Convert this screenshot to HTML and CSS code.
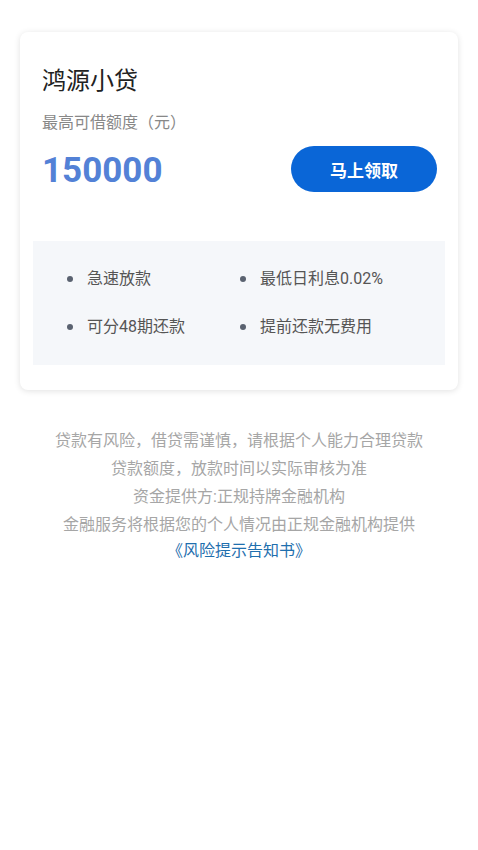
FILE: index.html
```html
<!DOCTYPE html>
<html lang="zh-CN">
<head>
<meta charset="utf-8">
<title>鸿源小贷</title>
<link rel="stylesheet" href="styles.css">
</head>
<body>
<div class="page-title">产品</div>
<div class="card">
  <div class="card-name">鸿源小贷</div>
  <div class="card-label">最高可借额度（元）</div>
  <div class="amount-row">
    <div class="amount">150000</div>
    <button class="apply-btn">马上领取</button>
  </div>
  <div class="features">
    <div class="feature"><span class="dot"></span><span>急速放款</span></div>
    <div class="feature"><span class="dot"></span><span>最低日利息0.02%</span></div>
    <div class="feature"><span class="dot"></span><span>可分48期还款</span></div>
    <div class="feature"><span class="dot"></span><span>提前还款无费用</span></div>
  </div>
</div>
<div class="notice">
  <p>贷款有风险，借贷需谨慎，请根据个人能力合理贷款</p>
  <p>贷款额度，放款时间以实际审核为准</p>
  <p>资金提供方:正规持牌金融机构</p>
  <p>金融服务将根据您的个人情况由正规金融机构提供</p>
  <p class="link">《风险提示告知书》</p>
</div>
</body>
</html>
```
FILE: styles.css
```css
* { box-sizing: border-box; }
html, body { margin: 0; padding: 0; background: #fff; }
body {
  font-family: Roboto, "Noto Sans CJK SC", sans-serif;
  width: 478px;
  overflow: hidden;
}
.page-title {
  margin: -27px 0 0 24px;
  font-size: 24px;
  line-height: 30px;
  height: 30px;
  color: #222;
}
.card {
  margin: 29px 20px 0;
  width: 438px;
  background: #fff;
  border-radius: 8px;
  box-shadow: 0 1px 6px rgba(0,0,0,0.12);
  padding: 32px 13px 25px;
}
.card-name {
  padding-left: 9px;
  font-size: 24px;
  line-height: 34px;
  color: #222;
}
.card-label {
  padding-left: 9px;
  margin-top: 14px;
  font-size: 16px;
  line-height: 22px;
  color: #888;
}
.amount-row {
  margin-top: 12px;
  padding: 0 8px 0 9px;
  display: flex;
  align-items: center;
  justify-content: space-between;
  height: 46px;
}
.amount {
  font-size: 35px;
  font-weight: 700;
  color: #5381d6;
  line-height: 46px;
  padding-top: 3px;
}
.apply-btn {
  width: 146px;
  height: 46px;
  border: none;
  border-radius: 23px;
  background: #0a66d7;
  color: #fff;
  font-family: inherit;
  font-size: 17px;
  font-weight: 700;
  padding: 0;
}
.features {
  margin-top: 49px;
  background: #f5f7fa;
  padding: 26px 0 26px 34px;
  display: grid;
  grid-template-columns: 173px 173px;
  row-gap: 24px;
}
.feature {
  display: flex;
  align-items: center;
  font-size: 16px;
  line-height: 24px;
  color: #555;
}
.dot {
  width: 6px;
  height: 6px;
  border-radius: 50%;
  background: #5a6270;
  margin-right: 14px;
  flex: none;
}
.notice {
  margin-top: 37px;
  text-align: center;
  font-size: 16px;
  line-height: 28px;
  color: #a6a6a6;
}
.notice p { margin: 0; }
.notice .link { color: #1f6fae; line-height: 24px; }
```
